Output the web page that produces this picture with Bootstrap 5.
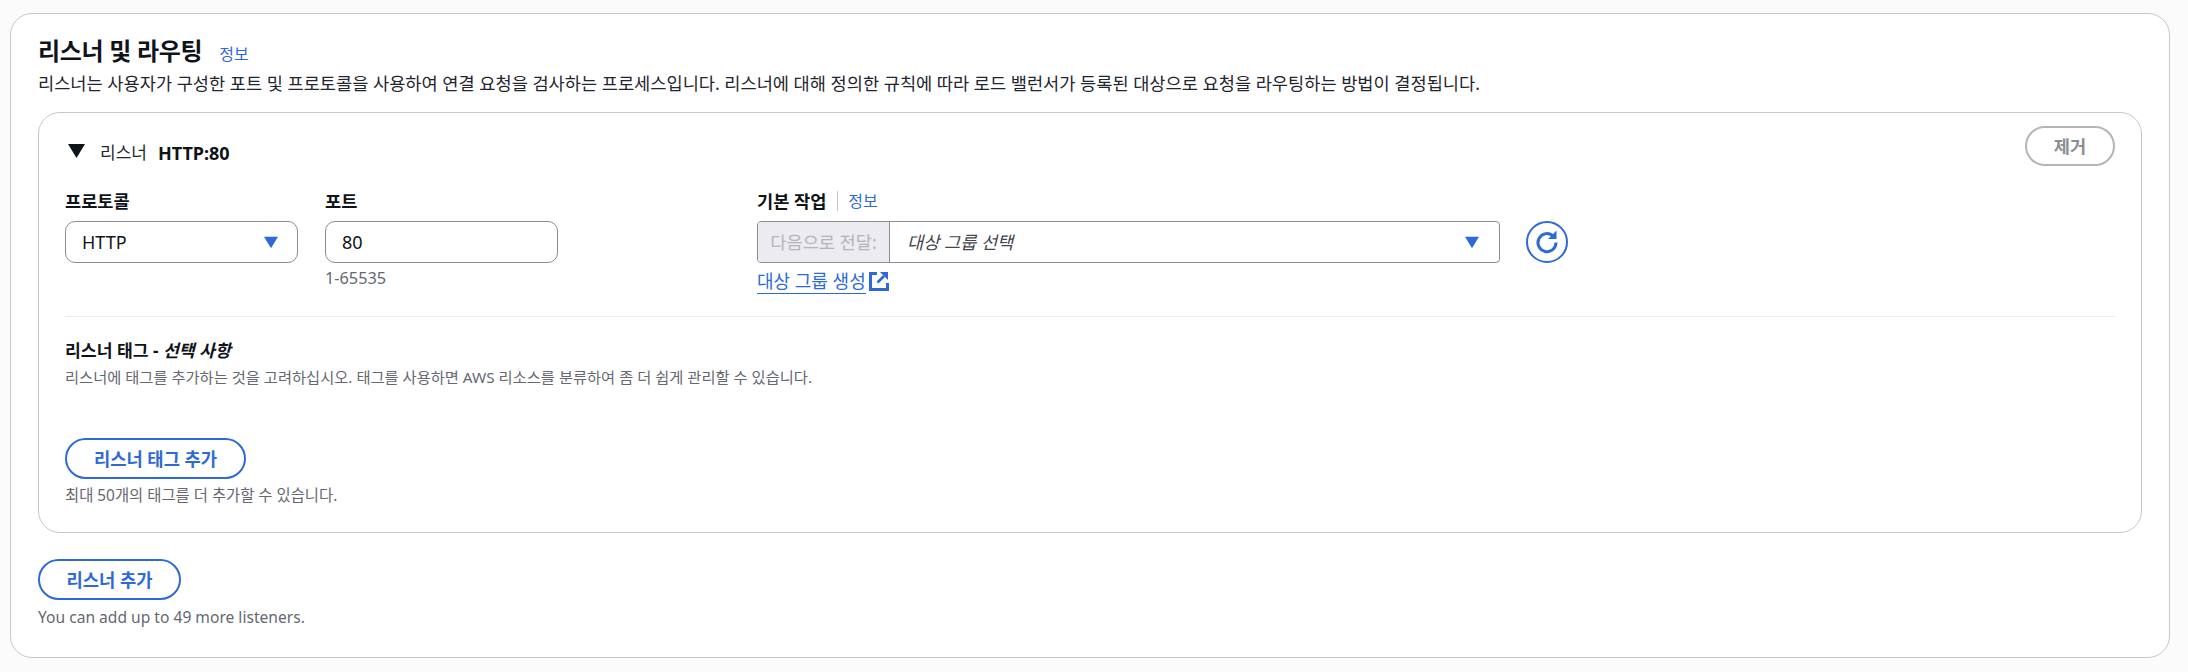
<!DOCTYPE html>
<html lang="ko">
<head>
<meta charset="utf-8">
<title>리스너 및 라우팅</title>
<link href="https://cdn.jsdelivr.net/npm/bootstrap@5.3.0/dist/css/bootstrap.min.css" rel="stylesheet">
<style>
body{background:#fbfbfb;font-family:"Noto Sans","Noto Sans CJK KR",sans-serif;color:#0f141a;font-size:17.6px;line-height:24px;padding:13px 18px 14px 10px;height:672px;overflow:hidden;}
.outer-box{background:#fff;border:1px solid #c6c6cd;border-radius:22px;padding:21px 27px 0 27px;height:645px;}
.title-row{height:32px;}
.main-title{font-size:24px;line-height:32px;font-weight:700;margin:0;letter-spacing:-.3px;}
.info-link{color:#2d6ad8;font-size:16px;line-height:20px;text-decoration:none;}
.title-info{margin:5px 0 0 17px;}
.desc-text{font-size:17.6px;line-height:24px;color:#1f2630;margin:4px 0 0;}
.inner-box{border:1px solid #c6c6cd;border-radius:22px;margin-top:17px;padding:17px 26px 0 26px;height:421px;}
.head-row{height:40px;}
.tri-icon{width:17px;height:14px;margin:0 15px 0 3px;display:block;transform:translateY(1px);}
.head-name{font-size:17px;color:#1f2630;margin-right:11px;margin-top:6px;}
.head-val{font-size:18px;font-weight:700;margin-top:6px;}
.field-row{margin-top:19px;}
.field-label{font-size:17.6px;line-height:24px;font-weight:700;height:24px;margin-bottom:8px;}
.proto-col{width:233px;margin-right:27px;}
.port-col{width:233px;margin-right:199px;}
.act-col{width:743px;margin-right:26px;}
.field-box{height:42px;border:1px solid #8c8c94;border-radius:10px;background:#fff;padding:0 19px 0 16px;font-size:18px;}
.down-tri{width:14px;height:13px;display:block;}
.hint-text{font-size:16.3px;line-height:22px;color:#656871;margin-top:4px;}
.sep-bar{border-left:1px solid #c6c6cd;height:20px;margin:0 10px 0 11px;}
.joined{height:42px;border:1px solid #8c8c94;border-radius:4px;overflow:hidden;}
.prefix-box{width:132px;background:#ebebf0;border-right:1px solid #8c8c94;color:#b4b4bb;font-size:17.6px;}
.ph-box{padding:0 20px 0 17px;font-style:italic;color:#424650;font-size:17.6px;}
.target-link{display:inline-flex;align-items:center;color:#2d6ad8;font-size:18px;line-height:24px;margin-top:8px;text-decoration:none;}
.target-link span{border-bottom:1.5px solid #2d6ad8;line-height:21px;padding-bottom:1px;margin-right:3px;}
.ext-icon{width:20px;height:20px;display:block;margin-top:-3px;}
.ring-btn{width:42px;height:42px;margin-top:32px;border:2px solid #2d6ad8;border-radius:50%;background:#fff;padding:0;display:flex;align-items:center;justify-content:center;}
.ring-icon{width:24px;height:24px;display:block;}
.rule-line{border-top:1px solid #ebebf0;margin:22px 0 0;}
.tag-title{font-size:17.2px;line-height:22px;font-weight:700;margin-top:23px;}
.tag-desc{font-size:15.3px;line-height:22px;color:#656871;margin-top:4px;}
.pill-btn{height:41px;border:2px solid #2d6ad8;border-radius:21px;background:#fff;color:#2d6ad8;font-size:17.7px;font-weight:700;padding:0;display:flex;align-items:center;justify-content:center;}
.tag-btn{width:181px;margin-top:50px;}
.add-btn{width:143px;margin-top:26px;}
.remove-btn{width:90px;height:40px;border:2px solid #b4b4bb;border-radius:20px;color:#8c8c94;font-size:17.6px;font-weight:700;background:#fff;padding:0;margin-top:-8px;display:flex;align-items:center;justify-content:center;}
.foot-hint{font-size:15.4px;line-height:22px;color:#656871;margin-top:6px;}
.foot-latin{font-size:15.6px;}
</style>
</head>
<body>
<div class="outer-box">
  <div class="title-row d-flex align-items-center">
    <h2 class="main-title">리스너 및 라우팅</h2>
    <a class="info-link title-info" href="#">정보</a>
  </div>
  <p class="desc-text">리스너는 사용자가 구성한 포트 및 프로토콜을 사용하여 연결 요청을 검사하는 프로세스입니다. 리스너에 대해 정의한 규칙에 따라 로드 밸런서가 등록된 대상으로 요청을 라우팅하는 방법이 결정됩니다.</p>
  <div class="inner-box">
    <div class="head-row d-flex align-items-center justify-content-between">
      <div class="d-flex align-items-center">
        <svg class="tri-icon" viewBox="0 0 17 14"><path d="M0 0H17L8.5 14Z" fill="#0f141a"/></svg>
        <span class="head-name">리스너</span><span class="head-val">HTTP:80</span>
      </div>
      <button class="remove-btn" type="button">제거</button>
    </div>
    <div class="field-row d-flex align-items-start">
      <div class="proto-col">
        <div class="field-label">프로토콜</div>
        <div class="field-box d-flex align-items-center justify-content-between">HTTP
          <svg class="down-tri" viewBox="0 0 16 13"><path d="M0 0H16L8 13Z" fill="#2d6ad8"/></svg>
        </div>
      </div>
      <div class="port-col">
        <div class="field-label">포트</div>
        <div class="field-box d-flex align-items-center">80</div>
        <div class="hint-text">1-65535</div>
      </div>
      <div class="act-col">
        <div class="field-label d-flex align-items-center">기본 작업<span class="sep-bar"></span><a class="info-link fw-normal" href="#">정보</a></div>
        <div class="joined d-flex">
          <div class="prefix-box d-flex align-items-center justify-content-center">다음으로 전달:</div>
          <div class="ph-box flex-grow-1 d-flex align-items-center justify-content-between">대상 그룹 선택
            <svg class="down-tri" viewBox="0 0 16 13"><path d="M0 0H16L8 13Z" fill="#2d6ad8"/></svg>
          </div>
        </div>
        <a class="target-link" href="#"><span>대상 그룹 생성</span>
          <svg class="ext-icon" viewBox="0 0 20 20" fill="none" stroke="#2d6ad8" stroke-width="3"><path d="M8 2.5H1.5V18.5H18.5V12"/><path d="M8.5 11.5L15 5" stroke-width="2.6"/><path d="M11 1H19V9Z" fill="#2d6ad8" stroke="none"/></svg>
        </a>
      </div>
      <button class="ring-btn" type="button" aria-label="새로 고침">
        <svg class="ring-icon" viewBox="0 0 24 24" fill="none" stroke="#2d6ad8" stroke-width="3"><path d="M17.5 5.5A9 9 0 1 0 21 12.5"/><path d="M13 9H21.5V.5Z" fill="#2d6ad8" stroke="none"/></svg>
      </button>
    </div>
    <div class="rule-line"></div>
    <div class="tag-title">리스너 태그 - <em>선택 사항</em></div>
    <div class="tag-desc">리스너에 태그를 추가하는 것을 고려하십시오. 태그를 사용하면 AWS 리소스를 분류하여 좀 더 쉽게 관리할 수 있습니다.</div>
    <button class="pill-btn tag-btn" type="button">리스너 태그 추가</button>
    <div class="foot-hint">최대 50개의 태그를 더 추가할 수 있습니다.</div>
  </div>
  <button class="pill-btn add-btn" type="button">리스너 추가</button>
  <div class="foot-hint foot-latin">You can add up to 49 more listeners.</div>
</div>
<script src="https://cdn.jsdelivr.net/npm/bootstrap@5.3.0/dist/js/bootstrap.bundle.min.js"></script>
</body>
</html>
